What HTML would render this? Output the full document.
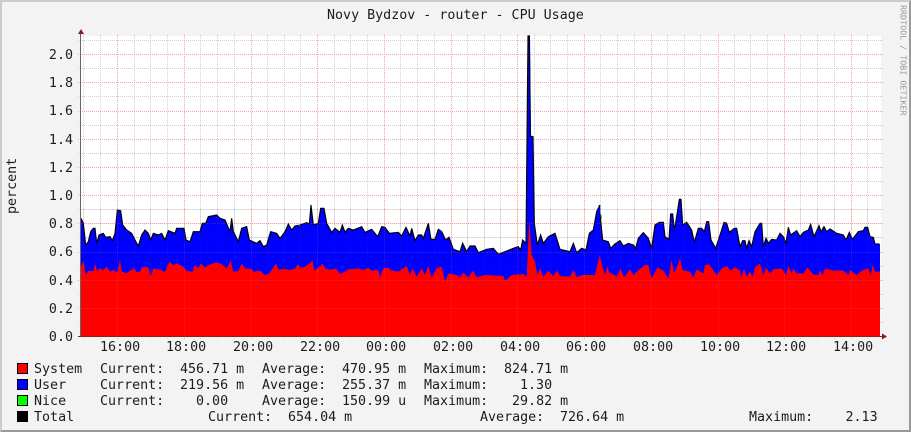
<!DOCTYPE html>
<html>
<head>
<meta charset="utf-8">
<style>
html,body{margin:0;padding:0;background:#f3f3f3}
svg{display:block}
text{font-family:"DejaVu Sans Mono","Liberation Mono",monospace;font-size:13.33px;fill:#1c1c1c;white-space:pre}
</style>
</head>
<body>
<svg xmlns="http://www.w3.org/2000/svg" width="911" height="432" viewBox="0 0 911 432">
<rect width="911" height="432" fill="#f3f3f3"/>
<path d="M0 0H911L909 2H2V430L0 432Z" fill="#cbcbcb"/>
<path d="M911 0V432H0L2 430H909V2Z" fill="#999"/>
<rect x="81" y="36" width="800" height="300" fill="#fff"/>

<!-- grid beneath the data -->
<g stroke="#cfcfcf" stroke-width="1" stroke-dasharray="1 1" shape-rendering="crispEdges" fill="none">
<path d="M78 322.5H883M78 294.5H883M78 266.5H883M78 237.5H883M78 209.5H883M78 181.5H883M78 153.5H883M78 125.5H883M78 96.5H883M78 68.5H883M78 40.5H883"/>
<path d="M83.5 34V339M100.5 34V339M134.5 34V339M150.5 34V339M167.5 34V339M200.5 34V339M217.5 34V339M234.5 34V339M267.5 34V339M284.5 34V339M300.5 34V339M334.5 34V339M350.5 34V339M367.5 34V339M400.5 34V339M417.5 34V339M434.5 34V339M467.5 34V339M484.5 34V339M500.5 34V339M534.5 34V339M550.5 34V339M567.5 34V339M600.5 34V339M617.5 34V339M634.5 34V339M667.5 34V339M684.5 34V339M700.5 34V339M734.5 34V339M750.5 34V339M767.5 34V339M800.5 34V339M817.5 34V339M834.5 34V339M867.5 34V339"/>
</g>
<g stroke="#f5a5a5" stroke-width="1" stroke-dasharray="1 1" shape-rendering="crispEdges" fill="none">
<path d="M78 308.5H883M78 280.5H883M78 252.5H883M78 223.5H883M78 195.5H883M78 167.5H883M78 139.5H883M78 111.5H883M78 82.5H883M78 54.5H883"/>
<path d="M117.5 34V340M184.5 34V340M251.5 34V340M317.5 34V340M384.5 34V340M451.5 34V340M517.5 34V340M584.5 34V340M651.5 34V340M718.5 34V340M784.5 34V340M851.5 34V340"/>
</g>

<!-- areas -->
<g transform="translate(0,200) scale(.33333)">
<path fill="#00f" d="M243 408V55L250 70 257 135 265 125 272 95 280 85 285 85 290 130 297 105 310 100 317 112 330 110 337 122 345 100 352 30 362 32 368 75 380 90 395 100 405 120 415 138 425 105 435 90 445 100 452 120 460 100 475 105 485 100 495 120 505 92 525 100 530 85 552 85 558 120 570 125 580 95 600 95 607 70 617 70 625 50 650 45 660 55 675 60 690 95 695 55 700 95 715 125 725 85 740 80 748 120 770 130 780 122 790 140 800 135 812 95 830 100 840 115 855 95 865 72 875 90 885 78 901 78V408Z"/>
<path fill="#f00" d="M243 408V200L250 182 257 225 265 213 280 213 285 192 292 213 297 205 310 210 320 200 330 215 340 210 352 218 360 178 365 213 378 220 390 212 403 205 410 217 420 215 425 202 445 202 452 228 460 205 475 208 495 215 508 185 520 195 530 190 550 200 560 213 578 215 583 197 595 203 603 190 615 203 625 195 650 187 665 192 680 205 692 182 700 215 715 213 725 190 735 205 755 207 760 215 780 212 795 225 805 222 815 210 828 190 835 208 855 207 870 210 885 205 895 192 901 205V408Z"/>
<path fill="none" stroke="#000" stroke-width="3.4" d="M243 55L250 70 257 135 265 125 272 95 280 85 285 85 290 130 297 105 310 100 317 112 330 110 337 122 345 100 352 30 362 32 368 75 380 90 395 100 405 120 415 138 425 105 435 90 445 100 452 120 460 100 475 105 485 100 495 120 505 92 525 100 530 85 552 85 558 120 570 125 580 95 600 95 607 70 617 70 625 50 650 45 660 55 675 60 690 95 695 55 700 95 715 125 725 85 740 80 748 120 770 130 780 122 790 140 800 135 812 95 830 100 840 115 855 95 865 72 875 90 885 78 900 75"/>
</g>
<g transform="translate(300,200) scale(.33333)">
<path fill="#00f" d="M0 408V75L20 68 28 72 33 15 40 75 55 70 62 25 72 25 80 70 95 97 105 85 120 97 127 75 135 97 145 85 160 90 185 80 195 97 215 88 233 110 245 80 255 82 268 100 295 97 305 108 318 82 330 108 335 85 345 122 355 105 365 105 370 115 385 70 393 118 405 118 415 88 425 95 437 120 447 112 460 148 480 155 488 130 500 155 510 138 525 138 535 158 560 148 580 145 595 163 615 155 640 145 655 140 662 150 668 120 678 130 684 -492 690 -492 693 -192 699 -190 703 70 712 135 722 105 730 130 745 110 765 100 780 148 810 155 820 130 830 158 845 145 858 150 868 100 880 90 890 35 901 15V408Z"/>
<path fill="#f00" d="M0 408V205L15 200 30 190 37 180 43 212 60 200 68 190 75 205 90 210 108 205 120 222 135 215 145 208 175 205 190 210 205 203 215 212 235 210 240 232 250 205 265 203 275 212 295 215 320 198 330 225 338 205 350 230 365 205 375 225 385 198 395 232 410 205 425 200 435 245 445 220 470 225 480 233 490 218 505 232 520 212 530 232 555 225 610 228 615 242 635 225 670 222 680 232 688 60 695 165 705 185 712 225 720 205 730 230 745 212 760 228 772 212 780 228 810 230 820 210 830 232 845 225 885 225 893 190 901 160V408Z"/>
<path fill="none" stroke="#000" stroke-width="3.4" d="M0 75L20 68 28 72 33 15 40 75 55 70 62 25 72 25 80 70 95 97 105 85 120 97 127 75 135 97 145 85 160 90 185 80 195 97 215 88 233 110 245 80 255 82 268 100 295 97 305 108 318 82 330 108 335 85 345 122 355 105 365 105 370 115 385 70 393 118 405 118 415 88 425 95 437 120 447 112 460 148 480 155 488 130 500 155 510 138 525 138 535 158 560 148 580 145 595 163 615 155 640 145 655 140 662 150 668 120 678 130 684 -492 688 -492 691 -192 699 -190 703 70 712 135 722 105 730 130 745 110 765 100 780 148 810 155 820 130 830 158 845 145 858 150 868 100 880 90 890 35 900 15"/>
</g>
<g transform="translate(600,180) scale(.33333)">
<path fill="#00f" d="M0 468V100L8 180 25 185 32 205 45 192 60 182 70 198 85 190 100 195 107 205 115 175 130 158 145 175 155 205 165 135 178 127 190 127 195 170 207 178 212 102 218 102 223 152 232 97 238 58 243 58 248 135 260 127 275 150 283 187 295 145 305 145 313 155 320 125 326 125 333 180 347 205 355 180 365 150 372 127 380 130 388 157 403 145 410 145 420 200 428 182 435 182 440 205 447 182 455 200 465 155 480 130 485 130 490 200 498 175 505 190 515 178 530 180 540 160 550 170 558 190 565 142 572 165 590 152 600 170 610 157 625 150 632 133 642 170 657 137 663 155 672 140 680 155 690 147 710 160 730 165 738 180 748 157 757 178 775 155 790 152 795 142 803 142 810 170 820 172 825 192 840 192V468Z"/>
<path fill="#f00" d="M0 468V230L8 262 15 285 22 260 28 278 45 285 50 290 62 265 72 292 90 268 100 285 110 275 135 255 145 255 155 295 172 262 190 272 205 295 215 240 222 280 232 258 240 235 248 270 270 275 280 292 290 268 310 280 315 255 327 253 340 270 350 287 365 265 382 258 390 272 405 262 420 272 425 292 432 265 440 290 450 275 458 290 465 262 480 250 490 285 498 262 510 280 520 268 545 265 558 285 565 258 575 280 580 265 590 280 610 280 622 262 640 283 655 285 660 270 668 287 675 265 700 272 730 272 745 285 750 270 770 285 785 272 805 265 812 285 818 255 825 275 840 275V468Z"/>
<path fill="none" stroke="#000" stroke-width="3.4" d="M0 100L8 180 25 185 32 205 45 192 60 182 70 198 85 190 100 195 107 205 115 175 130 158 145 175 155 205 165 135 178 127 190 127 195 170 207 178 212 102 218 102 223 152 232 97 238 58 243 58 248 135 260 127 275 150 283 187 295 145 305 145 313 155 320 125 326 125 333 180 347 205 355 180 365 150 372 127 380 130 388 157 403 145 410 145 420 200 428 182 435 182 440 205 447 182 455 200 465 155 480 130 485 130 490 200 498 175 505 190 515 178 530 180 540 160 550 170 558 190 565 142 572 165 590 152 600 170 610 157 625 150 632 133 642 170 657 137 663 155 672 140 680 155 690 147 710 160 730 165 738 180 748 157 757 178 775 155 790 152 795 142 803 142 810 170 820 172 825 192 838 192"/>
</g>
<rect x="598" y="205" width="1" height="1" fill="#0f0"/>
<rect x="601" y="215" width="1" height="4" fill="#0f0"/>

<!-- faint grid over the data -->
<g stroke="#555" stroke-opacity=".13" stroke-width="1" stroke-dasharray="1 1" shape-rendering="crispEdges" fill="none">
<path d="M81 322.5H881M81 294.5H881M81 266.5H881M81 237.5H881M81 209.5H881"/>
<path d="M83.5 209V336M100.5 209V336M134.5 209V336M150.5 209V336M167.5 209V336M200.5 209V336M217.5 209V336M234.5 209V336M267.5 209V336M284.5 209V336M300.5 209V336M334.5 209V336M350.5 209V336M367.5 209V336M400.5 209V336M417.5 209V336M434.5 209V336M467.5 209V336M484.5 209V336M500.5 209V336M534.5 209V336M550.5 209V336M567.5 209V336M600.5 209V336M617.5 209V336M634.5 209V336M667.5 209V336M684.5 209V336M700.5 209V336M734.5 209V336M750.5 209V336M767.5 209V336M800.5 209V336M817.5 209V336M834.5 209V336M867.5 209V336"/>
</g>
<g stroke="#ff8080" stroke-opacity=".22" stroke-width="1" stroke-dasharray="1 1" shape-rendering="crispEdges" fill="none">
<path d="M81 308.5H881M81 280.5H881M81 252.5H881M81 223.5H881"/>
<path d="M117.5 209V336M184.5 209V336M251.5 209V336M317.5 209V336M384.5 209V336M451.5 209V336M517.5 209V336M584.5 209V336M651.5 209V336M718.5 209V336M784.5 209V336M851.5 209V336"/>
</g>

<!-- axes -->
<rect x="80" y="33" width="1" height="304" fill="#666"/>
<rect x="78" y="336" width="805" height="1" fill="#8a2020"/>
<path d="M81 29L84 34H78Z" fill="#8a1c1c"/>
<path d="M887 336.5L882 333.5V339.5Z" fill="#8a1c1c"/>

<!-- title -->
<text x="327" y="19">Novy Bydzov - router - CPU Usage</text>

<!-- side text -->
<text transform="translate(900.5,5) rotate(90)" style="font-size:8.35px;fill:#999">RRDTOOL / TOBI OETIKER</text>
<text transform="translate(16,214) rotate(-90)">percent</text>

<!-- y labels -->
<g text-anchor="end">
<text x="73" y="59">2.0</text>
<text x="73" y="87">1.8</text>
<text x="73" y="115">1.6</text>
<text x="73" y="144">1.4</text>
<text x="73" y="172">1.2</text>
<text x="73" y="200">1.0</text>
<text x="73" y="228">0.8</text>
<text x="73" y="256">0.6</text>
<text x="73" y="285">0.4</text>
<text x="73" y="313">0.2</text>
<text x="73" y="341">0.0</text>
</g>

<!-- x labels -->
<text x="100" y="351">16:00</text>
<text x="166" y="351">18:00</text>
<text x="233" y="351">20:00</text>
<text x="300" y="351">22:00</text>
<text x="366" y="351">00:00</text>
<text x="433" y="351">02:00</text>
<text x="500" y="351">04:00</text>
<text x="566" y="351">06:00</text>
<text x="633" y="351">08:00</text>
<text x="700" y="351">10:00</text>
<text x="766" y="351">12:00</text>
<text x="833" y="351">14:00</text>

<!-- legend -->
<g stroke="#000" stroke-width="1" shape-rendering="crispEdges">
<rect x="17.5" y="363.5" width="10" height="10" fill="#f00"/>
<rect x="17.5" y="379.5" width="10" height="10" fill="#00f"/>
<rect x="17.5" y="395.5" width="10" height="10" fill="#0f0"/>
<rect x="17.5" y="411.5" width="10" height="10" fill="#000"/>
</g>
<text x="34" y="373">System</text>
<text x="34" y="389">User</text>
<text x="34" y="405">Nice</text>
<text x="34" y="421">Total</text>

<text x="100" y="373">Current:</text>
<text x="100" y="389">Current:</text>
<text x="100" y="405">Current:</text>
<text x="180" y="373">456.71 m</text>
<text x="180" y="389">219.56 m</text>
<text x="196" y="405">0.00</text>

<text x="262" y="373">Average:</text>
<text x="262" y="389">Average:</text>
<text x="262" y="405">Average:</text>
<text x="342" y="373">470.95 m</text>
<text x="342" y="389">255.37 m</text>
<text x="342" y="405">150.99 u</text>

<text x="424" y="373">Maximum:</text>
<text x="424" y="389">Maximum:</text>
<text x="424" y="405">Maximum:</text>
<text x="504" y="373">824.71 m</text>
<text x="520" y="389">1.30</text>
<text x="512" y="405">29.82 m</text>

<text x="208" y="421">Current:</text>
<text x="288" y="421">654.04 m</text>
<text x="480" y="421">Average:</text>
<text x="560" y="421">726.64 m</text>
<text x="749" y="421">Maximum:</text>
<text x="845.5" y="421">2.13</text>
</svg>
</body>
</html>
